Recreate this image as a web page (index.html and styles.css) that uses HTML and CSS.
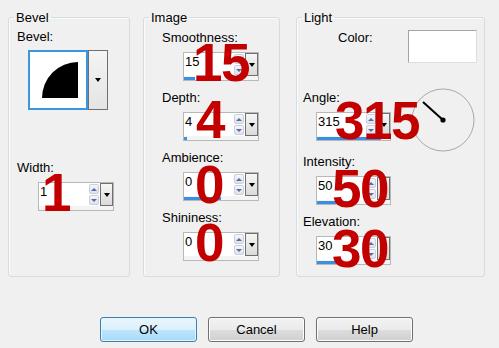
FILE: index.html
```html
<!DOCTYPE html>
<html>
<head>
<meta charset="utf-8">
<link rel="stylesheet" href="styles.css">
</head>
<body>
<div class="dialog">
  <div class="groups">
    <fieldset class="grp grp-bevel">
      <legend>Bevel</legend>
      <div class="gbody gbody-bevel">
        <div class="lbl">Bevel:</div>
        <div class="bevel-pick">
          <div class="bevel-preview">
            <svg width="56" height="56" viewBox="0 0 56 56"><path d="M48 46 H12 A36 36 0 0 1 48 10 Z" fill="#000"/></svg>
          </div>
          <div class="drop drop-tall"><i class="tri"></i></div>
        </div>
        <div class="lbl lbl-width">Width:</div>
        <div class="spin spin-width">
          <div class="spin-row">
            <span class="spin-val">1</span>
            <span class="spin-arrows"><i class="sbtn"><b class="up"></b></i><i class="sbtn"><b class="dn"></b></i></span>
            <span class="drop"><i class="tri"></i></span>
          </div>
          <div class="spin-track"><div class="spin-fill" style="width:0%"></div></div>
          <span class="big big-w">1</span>
        </div>
      </div>
    </fieldset>

    <fieldset class="grp grp-image">
      <legend>Image</legend>
      <div class="gbody gbody-image">
        <div class="field">
          <div class="lbl">Smoothness:</div>
          <div class="spin">
            <div class="spin-row">
              <span class="spin-val">15</span>
              <span class="spin-arrows"><i class="sbtn"><b class="up"></b></i><i class="sbtn"><b class="dn"></b></i></span>
              <span class="drop"><i class="tri"></i></span>
            </div>
            <div class="spin-track"><div class="spin-fill" style="width:15%"></div></div>
            <span class="big big-s">15</span>
          </div>
        </div>
        <div class="field">
          <div class="lbl">Depth:</div>
          <div class="spin">
            <div class="spin-row">
              <span class="spin-val">4</span>
              <span class="spin-arrows"><i class="sbtn"><b class="up"></b></i><i class="sbtn"><b class="dn"></b></i></span>
              <span class="drop"><i class="tri"></i></span>
            </div>
            <div class="spin-track"><div class="spin-fill" style="width:4%"></div></div>
            <span class="big big-d">4</span>
          </div>
        </div>
        <div class="field">
          <div class="lbl">Ambience:</div>
          <div class="spin">
            <div class="spin-row">
              <span class="spin-val">0</span>
              <span class="spin-arrows"><i class="sbtn"><b class="up"></b></i><i class="sbtn"><b class="dn"></b></i></span>
              <span class="drop"><i class="tri"></i></span>
            </div>
            <div class="spin-track"><div class="spin-fill" style="width:50%"></div></div>
            <span class="big big-am">0</span>
          </div>
        </div>
        <div class="field">
          <div class="lbl">Shininess:</div>
          <div class="spin">
            <div class="spin-row">
              <span class="spin-val">0</span>
              <span class="spin-arrows"><i class="sbtn"><b class="up"></b></i><i class="sbtn"><b class="dn"></b></i></span>
              <span class="drop"><i class="tri"></i></span>
            </div>
            <div class="spin-track"><div class="spin-fill" style="width:0%"></div></div>
            <span class="big big-sh">0</span>
          </div>
        </div>
      </div>
    </fieldset>

    <fieldset class="grp grp-light">
      <legend>Light</legend>
      <div class="gbody gbody-light">
        <div class="color-row">
          <div class="lbl lbl-color">Color:</div>
          <div class="swatch"></div>
        </div>
        <div class="angle-row">
          <div class="field field-light">
            <div class="lbl">Angle:</div>
            <div class="spin">
              <div class="spin-row">
                <span class="spin-val">315</span>
                <span class="spin-arrows"><i class="sbtn"><b class="up"></b></i><i class="sbtn"><b class="dn"></b></i></span>
                <span class="drop"><i class="tri"></i></span>
              </div>
              <div class="spin-track"><div class="spin-fill" style="width:87.5%"></div></div>
              <span class="big big-an">315</span>
            </div>
          </div>
          <svg class="dial" width="64" height="66" viewBox="0 0 64 66">
            <circle cx="32" cy="32" r="31" fill="none" stroke="#a9a9a9" stroke-width="1"/>
            <line x1="12" y1="14" x2="32" y2="32" stroke="#000" stroke-width="2"/>
            <circle cx="32" cy="32" r="2.6" fill="#000"/>
          </svg>
        </div>
        <div class="field field-light">
          <div class="lbl">Intensity:</div>
          <div class="spin">
            <div class="spin-row">
              <span class="spin-val">50</span>
              <span class="spin-arrows"><i class="sbtn"><b class="up"></b></i><i class="sbtn"><b class="dn"></b></i></span>
              <span class="drop"><i class="tri"></i></span>
            </div>
            <div class="spin-track"><div class="spin-fill" style="width:50%"></div></div>
            <span class="big big-in">50</span>
          </div>
        </div>
        <div class="field field-light">
          <div class="lbl">Elevation:</div>
          <div class="spin">
            <div class="spin-row">
              <span class="spin-val">30</span>
              <span class="spin-arrows"><i class="sbtn"><b class="up"></b></i><i class="sbtn"><b class="dn"></b></i></span>
              <span class="drop"><i class="tri"></i></span>
            </div>
            <div class="spin-track"><div class="spin-fill" style="width:33%"></div></div>
            <span class="big big-el">30</span>
          </div>
        </div>
      </div>
    </fieldset>
  </div>

  <div class="buttons">
    <button class="btn btn-ok">OK</button>
    <button class="btn">Cancel</button>
    <button class="btn">Help</button>
  </div>
</div>
</body>
</html>
```

FILE: styles.css
```css
* { box-sizing: border-box; }
html, body { margin: 0; padding: 0; background: #f0f0f0; }
body {
  width: 499px;
  height: 348px;
  overflow: hidden;
  font-family: "Liberation Sans", Arial, sans-serif;
  font-size: 13px;
  line-height: 15px;
  color: #000;
}
.dialog { padding: 10px 0 0 8px; }
.groups { display: flex; height: 267px; }

.grp {
  margin: 0;
  padding: 0;
  min-width: 0;
  border: 1px solid #d5dde3;
  border-radius: 3px;
  box-shadow: inset 1px 1px 0 #fbfbfb;
}
.grp legend {
  margin-left: 5px;
  padding: 0 2px;
  line-height: 15px;
}
.grp-bevel { width: 122px; }
.grp-image { width: 137px; margin-left: 13px; }
.grp-light { width: 189px; margin-left: 16px; }

.gbody-bevel { padding: 4px 0 0 8px; }
.gbody-image { padding: 5px 0 0 18px; }
.gbody-light { padding: 5px 0 0 6px; }

.lbl { height: 15px; white-space: nowrap; }

/* Bevel picker */
.bevel-pick { display: flex; margin: 6px 0 0 11px; height: 60px; }
.bevel-preview {
  width: 60px;
  height: 60px;
  border: 2px solid #3d95e0;
  background: #fff;
}
.bevel-preview svg { display: block; }
.drop {
  width: 13px;
  border: 1px solid #6f6f6f;
  background: linear-gradient(#f6f6f6, #dadada);
  display: flex;
  align-items: center;
  justify-content: center;
}
.drop-tall { width: 20px; background: linear-gradient(#f4f4f4, #e4e4e4); }
.tri {
  width: 0;
  height: 0;
  border-left: 3.5px solid transparent;
  border-right: 3.5px solid transparent;
  border-top: 4px solid #000;
}
.lbl-width { margin-top: 50px; }
.spin-width { margin: 6px 0 0 22px; height: 30px; }

/* Spin control */
.field { height: 60px; }
.spin {
  position: relative;
  width: 76px;
  height: 29px;
  margin: 7px 0 0 21px;
  border: 1px solid #b8b8b8;
  background: #fff;
  display: flex;
  flex-direction: column;
}
.field-light .spin { margin-left: 13px; width: 75px; }
.spin-row { flex: 1; display: flex; min-height: 0; }
.spin-val { flex: 1; padding: 1px 0 0 1px; }
.spin-arrows {
  width: 11px;
  display: flex;
  flex-direction: column;
  gap: 1px;
  padding: 1px 1px 1px 0;
}
.sbtn {
  flex: 1;
  border: 1px solid #c9cfdb;
  border-radius: 2px;
  background: linear-gradient(#f4f6fa, #dde3ee);
  display: flex;
  align-items: center;
  justify-content: center;
}
.sbtn .up, .sbtn .dn {
  width: 0;
  height: 0;
  border-left: 3px solid transparent;
  border-right: 3px solid transparent;
}
.sbtn .up { border-bottom: 3px solid #5d6b9e; }
.sbtn .dn { border-top: 3px solid #5d6b9e; }
.spin .drop { margin: 0; }
.spin-track { height: 4px; background: #f4f4f4; }
.spin-fill { height: 3px; margin-top: 1px; background: #3c8fe0; }

/* Light */
.color-row { display: flex; height: 60px; }
.lbl-color { margin-left: 35px; }
.swatch {
  width: 69px;
  height: 33px;
  margin-left: auto;
  margin-right: 7px;
  background: #fff;
  border: 1px solid #a5a5a5;
  border-right-color: #dedede;
  border-bottom-color: #dedede;
}
.angle-row { display: flex; }
.dial { display: block; margin: -2px 0 0 20px; }

/* Big red annotations */
.big {
  position: absolute;
  font-family: "Liberation Sans", Arial, sans-serif;
  font-weight: bold;
  font-size: 53px;
  line-height: 53px;
  letter-spacing: -1.5px;
  color: #c30000;
  white-space: nowrap;
}
.big-w { top: -17px; left: 3px; }
.big-s { top: -17px; left: 9px; }
.big-d { top: -20px; left: 12px; }
.big-am { top: -15px; left: 11px; }
.big-sh { top: -17px; left: 11px; }
.big-an { top: -19px; left: 18px; }
.big-in { top: -15px; left: 15px; }
.big-el { top: -15px; left: 15px; }

/* Buttons */
.buttons { display: flex; gap: 11px; margin-top: 40px; padding-left: 92px; }
.btn {
  width: 97px;
  height: 25px;
  padding: 0;
  font-family: "Liberation Sans", Arial, sans-serif;
  font-size: 13px;
  color: #000;
  border: 1px solid #707070;
  border-radius: 3px;
  background: linear-gradient(#f2f2f2 0%, #ebebeb 50%, #dddddd 51%, #cfcfcf 100%);
  box-shadow: inset 0 0 0 1px #fcfcfc;
}
.btn-ok {
  border-color: #3c7fb1;
  background: linear-gradient(#eaf6fd 0%, #d9f0fc 50%, #bee6fd 51%, #a7d9f5 100%);
  box-shadow: inset 0 0 0 1px #e4f4fc;
}
```
